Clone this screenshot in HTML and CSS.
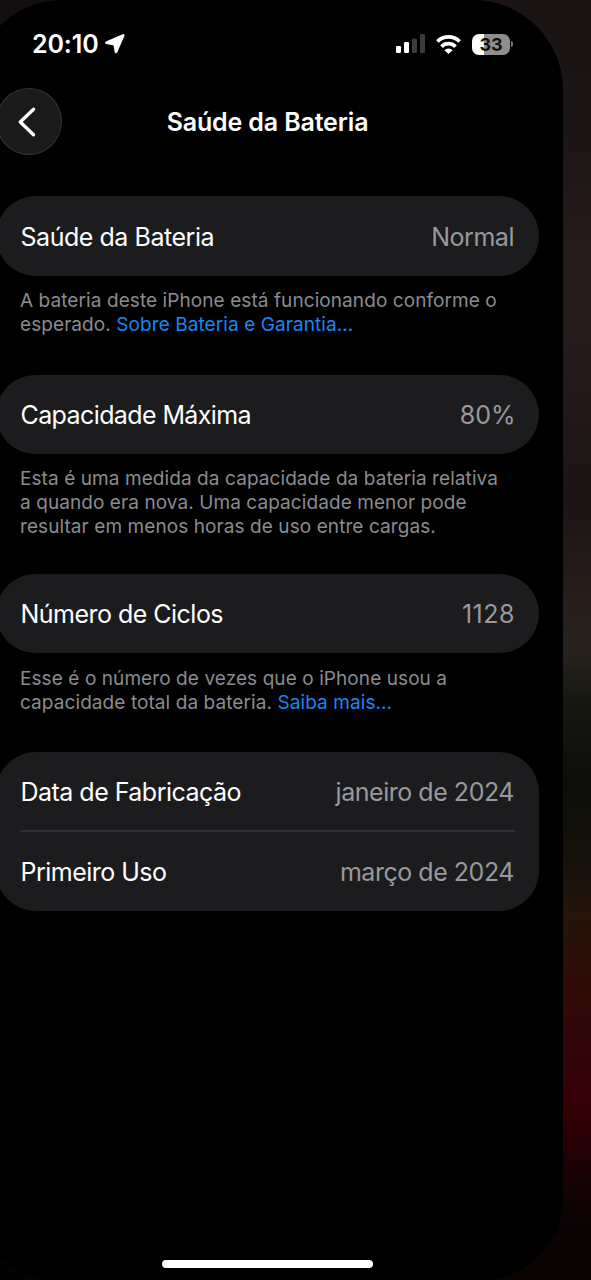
FILE: index.html
```html
<!DOCTYPE html>
<html lang="pt-BR">
<head>
<meta charset="utf-8">
<title>Saúde da Bateria</title>
<link rel="stylesheet" href="styles.css">
</head>
<body>
<div class="screen">
  <header class="status">
    <div class="status-left">
      <span class="clock">20:10</span>
      <svg class="location" width="20" height="20" viewBox="0 0 20 20"><path d="M1.400 8.800 18.200 1.400 11 18 9.600 10.300Z" fill="#fff" stroke="#fff" stroke-width="2.600" stroke-linejoin="round"/></svg>
    </div>
    <div class="status-right">
      <svg class="signal" width="30" height="20" viewBox="0 0 30 20"><rect x="0" y="12" width="5" height="7" rx="1.300" fill="#fff"/><rect x="8" y="8" width="5" height="11" rx="1.300" fill="#fff"/><rect x="16" y="4.500" width="5" height="14.500" rx="1.300" fill="#3b3b3b"/><rect x="24" y="0" width="5" height="19" rx="1.300" fill="#3b3b3b"/></svg>
      <svg class="wifi" width="25" height="19" viewBox="0 0 25 19"><g fill="none" stroke="#fff" stroke-width="3.700"><path d="M1.400 6.500a15.800 15.800 0 0 1 22.200 0"/><path d="M5.500 11.600a9.900 9.900 0 0 1 14 0"/></g><path d="M12.500 19 8.400 15.200a5.800 5.800 0 0 1 8.200 0Z" fill="#fff"/></svg>
      <div class="battery"><span class="battery-body">33</span><span class="battery-tip"></span></div>
    </div>
  </header>
  <nav class="navbar">
    <button class="back" aria-label="Voltar"><svg width="18" height="30" viewBox="0 0 18 30"><path d="M15.500 2.200 2.300 15l13.200 12.800" fill="none" stroke="#fff" stroke-width="3.300" stroke-linecap="round" stroke-linejoin="round"/></svg></button>
    <h1 class="title">Saúde da Bateria</h1>
  </nav>
  <main class="content">
    <section class="group g1">
      <div class="card"><div class="row"><span class="label l1">Saúde da Bateria</span><span class="value">Normal</span></div></div>
      <p class="note">A bateria deste iPhone está funcionando conforme o<br>esperado. <a class="link">Sobre Bateria e Garantia...</a></p>
    </section>
    <section class="group g2">
      <div class="card"><div class="row"><span class="label l2">Capacidade Máxima</span><span class="value percent">80%</span></div></div>
      <p class="note">Esta é uma medida da capacidade da bateria relativa<br>a quando era nova. Uma capacidade menor pode<br>resultar em menos horas de uso entre cargas.</p>
    </section>
    <section class="group g3">
      <div class="card"><div class="row"><span class="label">Número de Ciclos</span><span class="value count">1128</span></div></div>
      <p class="note">Esse é o número de vezes que o iPhone usou a<br>capacidade total da bateria. <a class="link">Saiba mais...</a></p>
    </section>
    <section class="group g4">
      <div class="card tall">
        <div class="row"><span class="label">Data de Fabricação</span><span class="value">janeiro de 2024</span></div>
        <div class="row"><span class="label">Primeiro Uso</span><span class="value">março de 2024</span></div>
      </div>
    </section>
  </main>
  <div class="home"></div>
</div>
</body>
</html>
```
FILE: styles.css
```css
* { box-sizing: border-box; }
html, body { margin: 0; padding: 0; }
body {
  width: 591px; height: 1280px; overflow: hidden;
  font-family: Inter, "Liberation Sans", sans-serif; color: #fff;
  background:
    linear-gradient(180deg, #130e0e 0 200px, #030303 1100px) 0 0 / 150px 100% no-repeat,
    linear-gradient(180deg, #1a1414 0, #1c1415 130px, #281b1b 270px, #251a1b 360px, #1c1315 500px, #271e1a 600px, #28221d 650px, #141610 710px, #0d0e09 780px, #15110a 860px, #24150c 910px, #300b09 980px, #300508 1060px, #350004 1105px, #260003 1145px, #160405 1180px, #090203 1230px, #0c0202 1280px);
}
.screen {
  width: 590px; height: 1280px; margin-left: -27px; padding: 0 24px 0 23px;
  background: #000; border-radius: 90px 90px 82px 82px; overflow: hidden;
  display: flex; flex-direction: column;
}
.status { height: 88px; padding: 0 26px 0 36px; display: flex; justify-content: space-between; align-items: center; flex: none; }
.status-left, .status-right { display: flex; align-items: center; }
.clock { font-size: 25px; line-height: 30px; font-weight: 600; letter-spacing: -0.1px; }
.location { margin-left: 6px; }
.signal { margin-right: 10px; }
.wifi { margin-right: 11px; }
.battery { display: flex; align-items: center; gap: 1px; }
.battery-body { width: 38px; height: 21px; border-radius: 7px; background: linear-gradient(90deg, #fff 0 12.500px, #8e8e8e 12.500px); color: #111; font-size: 18px; line-height: 21px; font-weight: 700; text-align: center; }
.battery-tip { width: 2px; height: 6px; border-radius: 0 3px 3px 0; background: #777; }
.navbar { height: 67px; display: grid; grid-template-columns: 66px 1fr 66px; align-items: center; flex: none; }
.back { width: 66px; height: 67px; padding: 0 5px 0 0; border: 1px solid #343434; border-radius: 50%; background: #1a1a1a; display: flex; align-items: center; justify-content: center; }
.title { margin: 0; font-size: 25px; line-height: 30px; font-weight: 600; text-align: center; letter-spacing: -0.15px; white-space: nowrap; }
.content { padding-top: 41px; flex: 1; }
.g1 { height: 178.500px; }
.g2 { height: 199px; }
.g3 { height: 178.500px; }
.card { border-radius: 40px; background: #1c1c1e; }
.row { height: 79.500px; padding: 1px 25px 0 24.500px; display: flex; align-items: center; justify-content: space-between; font-size: 25px; line-height: 32px; white-space: nowrap; }
.g1 .row { padding-top: 2px; }
.label { letter-spacing: -0.52px; }
.l1 { letter-spacing: -0.46px; }
.l2 { letter-spacing: -0.6px; }
.value { color: #98989e; letter-spacing: -0.47px; }
.percent { letter-spacing: 0; margin-right: -1.500px; }
.count { letter-spacing: 0.500px; margin-right: -1px; }
.tall .row + .row { position: relative; }
.tall .row + .row::before { content: ""; position: absolute; left: 24px; right: 24px; top: -2px; height: 2px; background: #303032; }
.note { margin: 0; padding: 13px 0 0 24px; font-size: 19px; line-height: 24px; letter-spacing: 0.08px; color: #8b8b90; white-space: nowrap; }
.g3 .note { padding-top: 14px; }
.link { color: #1687f5; }
.home { width: 211px; height: 8px; margin: 0 auto 12px; border-radius: 4px; background: #fff; flex: none; }
```
